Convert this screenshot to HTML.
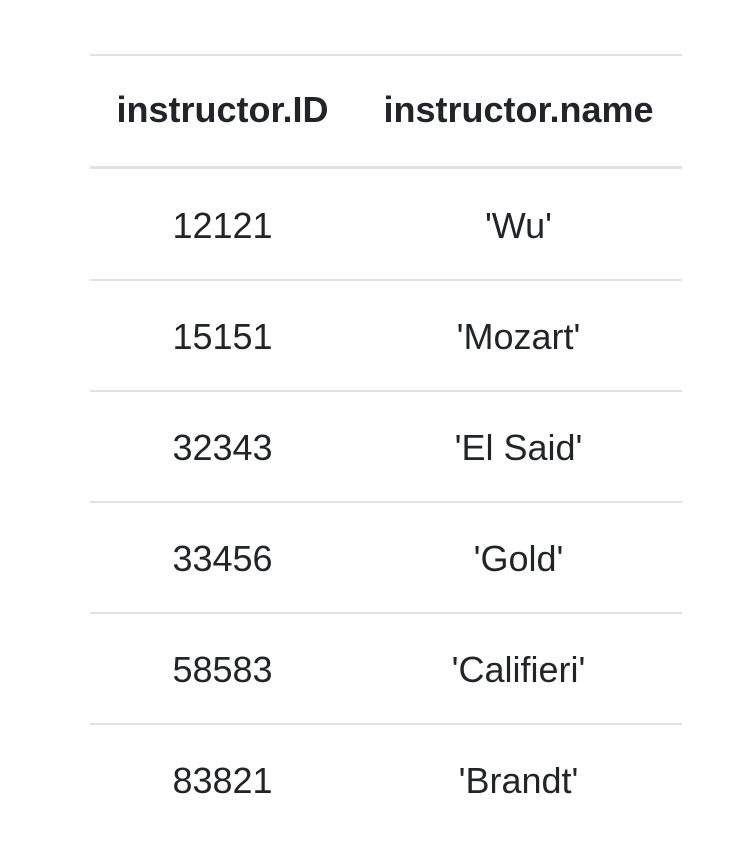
<!DOCTYPE html>
<html><head><style>
body{margin:0;width:738px;height:856px;background:#fff;font-family:"Liberation Sans",Arial,sans-serif;color:#212529;position:relative;overflow:hidden}
.l{position:absolute;left:90px;width:592px;background:#dee2e6}
.t{position:absolute;height:40px;line-height:40px;text-align:center;font-size:36px}
.c1{left:90px;width:265px}
.c2{left:355px;width:327px}
.h{font-weight:bold}
</style></head><body>
<div class="l" style="top:54px;height:2px"></div>
<div class="l" style="top:166px;height:3px"></div>
<div class="l" style="top:279px;height:2px"></div>
<div class="l" style="top:390px;height:2px"></div>
<div class="l" style="top:501px;height:2px"></div>
<div class="l" style="top:612px;height:2px"></div>
<div class="l" style="top:723px;height:2px"></div>
<div class="t h c1" style="top:90px">instructor.ID</div>
<div class="t h c2" style="top:90px">instructor.name</div>
<div class="t c1" style="top:206px">12121</div><div class="t c2" style="top:206px">'Wu'</div>
<div class="t c1" style="top:317px">15151</div><div class="t c2" style="top:317px">'Mozart'</div>
<div class="t c1" style="top:428px">32343</div><div class="t c2" style="top:428px">'El Said'</div>
<div class="t c1" style="top:539px">33456</div><div class="t c2" style="top:539px">'Gold'</div>
<div class="t c1" style="top:650px">58583</div><div class="t c2" style="top:650px">'Califieri'</div>
<div class="t c1" style="top:761px">83821</div><div class="t c2" style="top:761px">'Brandt'</div>
</body></html>
